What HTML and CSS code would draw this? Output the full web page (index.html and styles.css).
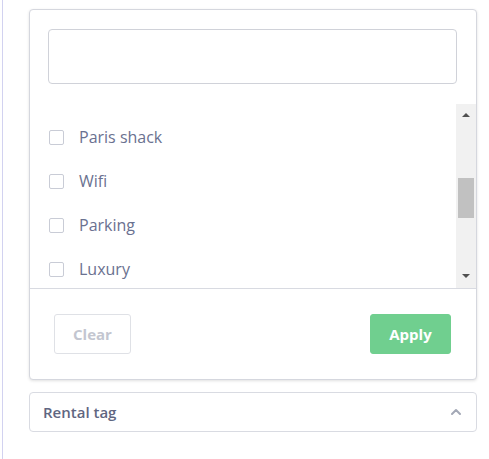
FILE: index.html
```html
<!DOCTYPE html>
<html>
<head>
<meta charset="utf-8">
<link rel="stylesheet" href="styles.css">
</head>
<body>
<div class="panel">
  <div class="card">
    <div class="search-wrap">
      <input class="search" type="text">
    </div>
    <div class="list-area">
      <div class="list">
        <label class="row"><span class="box"></span><span class="label">Paris shack</span></label>
        <label class="row"><span class="box"></span><span class="label">Wifi</span></label>
        <label class="row"><span class="box"></span><span class="label">Parking</span></label>
        <label class="row"><span class="box"></span><span class="label">Luxury</span></label>
      </div>
      <div class="scrollbar">
        <div class="arrow up"></div>
        <div class="track"><div class="thumb"></div></div>
        <div class="arrow down"></div>
      </div>
    </div>
    <div class="footer">
      <button class="btn clear">Clear</button>
      <button class="btn apply">Apply</button>
    </div>
  </div>
  <div class="accordion">
    <span class="acc-title">Rental tag</span>
    <svg class="chev" width="12" height="8" viewBox="0 0 12 8"><path d="M2 6 L6 2 L10 6" fill="none" stroke="#a3a8b6" stroke-width="2" stroke-linecap="round" stroke-linejoin="round"/></svg>
  </div>
</div>
</body>
</html>
```
FILE: styles.css
```css
html, body {
  margin: 0;
  padding: 0;
  background: #ffffff;
  font-family: "Open Sans", "Liberation Sans", sans-serif;
}
.panel {
  margin-left: 2px;
  border-left: 1px solid #d2d2f0;
  padding: 9px 12px 28px 26px;
  width: 448px;
  height: 422px;
}
.card {
  border: 1px solid #d5d7de;
  border-radius: 4px;
  box-shadow: 0 1px 3px rgba(0, 0, 0, 0.12);
  background: #fff;
  display: flex;
  flex-direction: column;
}
.search-wrap {
  padding: 19px 19px 20px 18px;
}
.search {
  display: block;
  box-sizing: border-box;
  width: 100%;
  height: 55px;
  border: 1px solid #d0d2d9;
  border-radius: 4px;
  outline: none;
  margin: 0;
}
.list-area {
  display: flex;
  height: 184px;
}
.list {
  flex: 1;
  overflow: hidden;
  padding-top: 11px;
}
.row {
  display: flex;
  align-items: center;
  height: 44px;
  padding-left: 19px;
  gap: 15px;
}
.box {
  width: 13px;
  height: 13px;
  border: 1px solid #c9ccd6;
  border-radius: 2px;
  flex: none;
}
.label {
  font-size: 16px;
  color: #6a7190;
}
.scrollbar {
  width: 20px;
  background: #f1f1f1;
  display: flex;
  flex-direction: column;
  align-items: center;
}
.arrow {
  width: 0;
  height: 0;
  border-left: 4px solid transparent;
  border-right: 4px solid transparent;
}
.arrow.up {
  margin-top: 9px;
  border-bottom: 4px solid #505050;
}
.arrow.down {
  margin-bottom: 10px;
  border-top: 4px solid #505050;
}
.track {
  flex: 1;
  width: 100%;
  display: flex;
  flex-direction: column;
  align-items: center;
}
.thumb {
  margin-top: 61px;
  width: 16px;
  height: 40px;
  background: #c1c1c1;
}
.footer {
  border-top: 1px solid #d8dae1;
  display: flex;
  justify-content: space-between;
  padding: 25px 25px 25px 24px;
}
.btn {
  height: 40px;
  border-radius: 3px;
  font-family: "Open Sans", "Liberation Sans", sans-serif;
  font-size: 15px;
  font-weight: 700;
  padding: 0;
  margin: 0;
}
.clear {
  width: 77px;
  background: #fff;
  border: 1px solid #dfe1e6;
  color: #c3c6d0;
}
.apply {
  width: 81px;
  background: #70cf8f;
  border: 1px solid #70cf8f;
  color: #fff;
}
.accordion {
  margin-top: 12px;
  height: 38px;
  border: 1px solid #d9dbe2;
  border-radius: 4px;
  display: flex;
  align-items: center;
  justify-content: space-between;
  padding: 0 14px 0 13px;
}
.acc-title {
  font-size: 15px;
  font-weight: 600;
  color: #5f6681;
}
.chev {
  display: block;
}
```
